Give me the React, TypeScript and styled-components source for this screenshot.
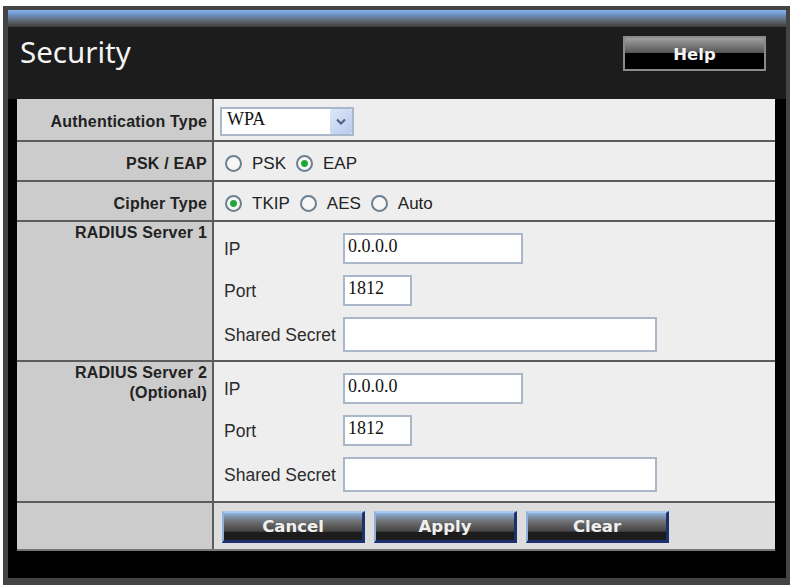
import React from "react";
import styled, { createGlobalStyle } from "styled-components";

const GlobalStyle = createGlobalStyle`
  html, body {
    margin: 0;
    padding: 0;
    background: #fff;
    overflow: hidden;
  }
`;

export default function App() {
  return (
    <>
      <GlobalStyle />
      <Frame>
        <TitleBar />
        <Header>
          <Title>Security</Title>
          <HelpButton type="button">Help</HelpButton>
        </Header>
        <Content>
          <Table>
            <Row>
              <Label>Authentication Type</Label>
              <Cell>
                <SelectBox>
                  <SelectValue>WPA</SelectValue>
                  <SelectArrow>
                    <svg width="10" height="8" viewBox="0 0 10 8">
                      <path d="M1 1.5 L5 5.5 L9 1.5" fill="none" stroke="#4d6185" strokeWidth="2.2" />
                    </svg>
                  </SelectArrow>
                </SelectBox>
              </Cell>
            </Row>
            <Row $height={40}>
              <Label>PSK / EAP</Label>
              <RadioCell>
                <Radio name="mode" label="PSK" />
                <Radio name="mode" label="EAP" checked />
              </RadioCell>
            </Row>
            <Row $height={40}>
              <Label>Cipher Type</Label>
              <RadioCell>
                <Radio name="cipher" label="TKIP" checked />
                <Radio name="cipher" label="AES" />
                <Radio name="cipher" label="Auto" />
              </RadioCell>
            </Row>
            <ServerRow label="RADIUS Server 1" height={140} />
            <ServerRow label="RADIUS Server 2" note="(Optional)" height={141} />
            <FooterRow>
              <Label />
              <FooterCell>
                <ActionButton type="button">Cancel</ActionButton>
                <ActionButton type="button">Apply</ActionButton>
                <ActionButton type="button">Clear</ActionButton>
              </FooterCell>
            </FooterRow>
          </Table>
        </Content>
      </Frame>
    </>
  );
}

function Radio({ name, label, checked }: { name: string; label: string; checked?: boolean }) {
  return (
    <RadioLabel>
      <RadioInput type="radio" name={name} defaultChecked={checked} />
      {label}
    </RadioLabel>
  );
}

function ServerRow({ label, note, height }: { label: string; note?: string; height: number }) {
  return (
    <Row $height={height}>
      <TopLabel>
        {label}
        {note && <br />}
        {note}
      </TopLabel>
      <ServerCell>
        <FieldRow>
          <FieldName>IP</FieldName>
          <TextInput $width={180} defaultValue="0.0.0.0" />
        </FieldRow>
        <FieldRow>
          <FieldName>Port</FieldName>
          <TextInput $width={69} defaultValue="1812" />
        </FieldRow>
        <FieldRow>
          <FieldName>Shared Secret</FieldName>
          <TextInput $width={314} $tall />
        </FieldRow>
      </ServerCell>
    </Row>
  );
}

const Frame = styled.div`
  box-sizing: border-box;
  width: 787px;
  height: 579px;
  margin: 6px 0 0 3px;
  background: #000;
  border-style: solid;
  border-color: #444;
  border-width: 4px 4px 7px 5px;
  display: flex;
  flex-direction: column;
`;

const TitleBar = styled.div`
  height: 17px;
  background: linear-gradient(#86b2ee 0%, #6f95c8 25%, #5e6670 65%, #3c3c3c 100%);
`;

const Header = styled.div`
  height: 72px;
  box-sizing: border-box;
  background: #1c1c1c;
  display: flex;
  align-items: flex-start;
  justify-content: space-between;
  padding: 9px 20px 0 12px;
`;

const Title = styled.h1`
  margin: -2px 0 0;
  font-family: "Noto Sans", "Open Sans", sans-serif;
  font-size: 29.5px;
  line-height: 36px;
  font-weight: 400;
  color: #f4f4f4;
`;

const HelpButton = styled.button`
  box-sizing: border-box;
  width: 143px;
  height: 35px;
  padding: 2px 0 0;
  border: 2px solid #8a8a8a;
  background: linear-gradient(#a0a0a0 0%, #555 48%, #000 50%, #000 100%);
  color: #f4f4f4;
  font-family: "DejaVu Sans", sans-serif;
  font-size: 16.5px;
  font-weight: 700;
`;

const Content = styled.div`
  flex: 1;
  padding: 0 10px 0 9px;
`;

const Table = styled.div`
  width: 758px;
  background: #eee;
  border-bottom: 2px solid #777;
`;

const Row = styled.div<{ $height?: number }>`
  box-sizing: border-box;
  height: ${(p) => p.$height ?? 43}px;
  display: grid;
  grid-template-columns: 197px 1fr;
  border-bottom: 2px solid #5c5c5c;
`;

const FooterRow = styled(Row)`
  height: 46px;
  border-bottom: none;
`;

const Label = styled.div`
  box-sizing: border-box;
  background: #ccc;
  border-right: 2px solid #5c5c5c;
  padding: 5px 5px 0 0;
  display: flex;
  align-items: center;
  justify-content: flex-end;
  text-align: right;
  font-family: "Liberation Sans", Arial, sans-serif;
  font-size: 16px;
  letter-spacing: 0.2px;
  font-weight: 700;
  color: #222;
`;

const TopLabel = styled(Label)`
  display: block;
  padding-top: 1px;
  line-height: 20px;
`;

const Cell = styled.div`
  display: flex;
  align-items: center;
  padding-left: 6px;
  font-family: "Liberation Sans", Arial, sans-serif;
  font-size: 17px;
  color: #222;
`;

const RadioCell = styled(Cell)`
  gap: 10px;
  padding: 5px 0 0 11px;
`;

const SelectBox = styled.div`
  box-sizing: border-box;
  width: 134px;
  height: 29px;
  margin-top: 4px;
  display: flex;
  justify-content: space-between;
  background: #fff;
  border: 2px solid #a9b7c9;
`;

const SelectValue = styled.span`
  padding: 0 0 0 5px;
  font-family: "Liberation Serif", serif;
  font-size: 18px;
  line-height: 21px;
  color: #111;
`;

const SelectArrow = styled.span`
  width: 22px;
  display: flex;
  align-items: center;
  justify-content: center;
  border-radius: 2px;
  background: linear-gradient(135deg, #dfe8f7, #b7c9ec);
`;

const RadioLabel = styled.label`
  display: flex;
  align-items: center;
  gap: 10px;
`;

const RadioInput = styled.input`
  appearance: none;
  margin: 0;
  width: 17px;
  height: 17px;
  border-radius: 50%;
  border: 2px solid #6d7f90;
  background: #f6f6f6;

  &:checked {
    background: radial-gradient(circle, #1fa83a 0 3px, #f6f6f6 4px);
  }
`;

const ServerCell = styled.div`
  padding: 11px 0 0 10px;
  display: flex;
  flex-direction: column;
  gap: 11px;
`;

const FieldRow = styled.div`
  display: flex;
  align-items: center;
`;

const FieldName = styled.span`
  width: 119px;
  padding-top: 2px;
  font-family: "Liberation Sans", Arial, sans-serif;
  font-size: 17.5px;
  color: #2c2c2c;
`;

const TextInput = styled.input<{ $width: number; $tall?: boolean }>`
  box-sizing: border-box;
  width: ${(p) => p.$width}px;
  height: ${(p) => (p.$tall ? 35 : 31)}px;
  padding: 0 0 5px 3px;
  border: 2px solid #a9b7c9;
  outline: none;
  background: #fff;
  font-family: "Liberation Serif", serif;
  font-size: 18px;
  color: #111;
`;

const FooterCell = styled.div`
  background: #ddd;
  display: flex;
  gap: 9px;
  padding: 8px 0 0 8px;
`;

const ActionButton = styled.button`
  box-sizing: border-box;
  width: 143px;
  height: 32px;
  padding: 0;
  border-style: solid;
  border-width: 2px 3px 3px 2px;
  border-color: #a9c8ee #1c2f6e #1c2f6e #8fb0da;
  background: linear-gradient(#8fb6e6 0%, #7d8fa5 15%, #6c6c6c 35%, #444 68%, #1c1c1c 70%, #1c1c1c 100%);
  color: #f0f0f0;
  font-family: "DejaVu Sans", sans-serif;
  font-size: 16.5px;
  font-weight: 700;
`;
